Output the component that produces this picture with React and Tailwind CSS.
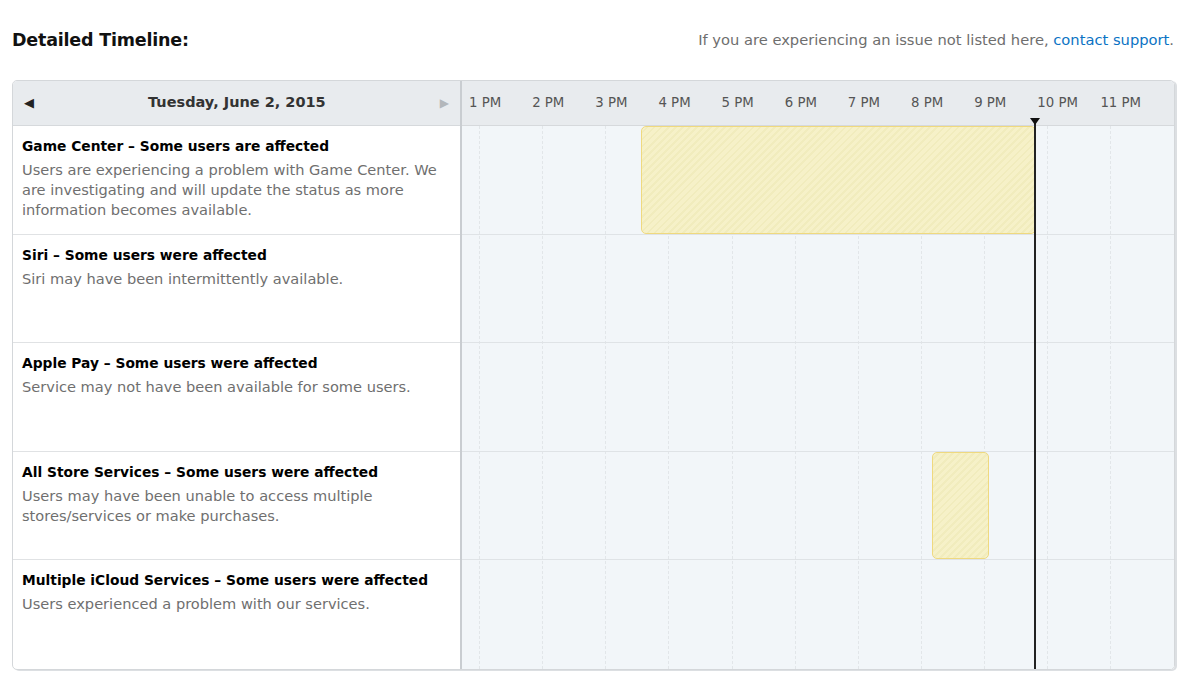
import React from 'react';

const incidents = [
  {
    title: 'Game Center - Some users are affected',
    desc: 'Users are experiencing a problem with Game Center. We are investigating and will update the status as more information becomes available.',
  },
  { title: 'Siri - Some users were affected', desc: 'Siri may have been intermittently available.' },
  { title: 'Apple Pay - Some users were affected', desc: 'Service may not have been available for some users.' },
  {
    title: 'All Store Services - Some users were affected',
    desc: 'Users may have been unable to access multiple stores/services or make purchases.',
  },
  { title: 'Multiple iCloud Services - Some users were affected', desc: 'Users experienced a problem with our services.' },
];

const hours = ['1 PM', '2 PM', '3 PM', '4 PM', '5 PM', '6 PM', '7 PM', '8 PM', '9 PM', '10 PM', '11 PM'];

// bars in px relative to timeline body
const bars = [
  { row: 0, left: 179, width: 395 },
  { row: 3, left: 470, width: 57 },
];

const ROW_H = 108.5;

function App() {
  return (
    <div className="w-[1200px] h-[690px] bg-white font-['DejaVu_Sans',sans-serif]">
      <div className="h-[80px] px-3 flex items-center justify-between">
        <h2 className="text-[17.5px] font-bold text-[#111] tracking-[-0.2px]">Detailed Timeline:</h2>
        <p className="text-[14.7px] text-[#6e6e6e] mr-[14px]">
          If you are experiencing an issue not listed here,{' '}
          <span className="text-[#0b73c4]">contact support</span>.
        </p>
      </div>

      <div className="ml-3 w-[1163px] flex border border-[#d4d7da] rounded-[5px] overflow-hidden shadow-[2px_1px_0_#dcdfe2]">
        {/* left list */}
        <div className="w-[447px] shrink-0 flex flex-col">
          <div className="h-[45px] bg-[#e8ebee] border-b border-[#d6d9dc] flex items-center px-[11px]">
            <span className="text-[13px] text-[#222]">◀</span>
            <span className="flex-1 text-center text-[14.5px] font-bold text-[#333]">Tuesday, June 2, 2015</span>
            <span className="text-[12px] text-[#b3b7bb]">▶</span>
          </div>
          {incidents.map((it, i) => (
            <div
              key={i}
              className={`h-[108.5px] px-[9px] pt-[10px] ${i < incidents.length - 1 ? 'border-b border-[#e0e2e4]' : ''}`}
            >
              <div className="text-[13.8px] leading-[20px] font-bold text-black">{it.title.replace(' - ', ' – ')}</div>
              <div className="mt-[4px] text-[14.6px] leading-[20px] text-[#6f6f6f] pr-[4px]">{it.desc}</div>
            </div>
          ))}
        </div>

        {/* divider */}
        <div className="w-[2px] shrink-0 bg-[#c9cdd1]" />

        {/* timeline */}
        <div className="flex-1 flex flex-col relative">
          <div className="h-[45px] bg-[#e8ebee] border-b border-[#d6d9dc] flex items-center pl-[7px]">
            {hours.map((h) => (
              <div key={h} className="w-[63.15px] shrink-0 text-[13.3px] text-[#555]">
                {h}
              </div>
            ))}
          </div>
          <div className="relative flex-1 bg-[#f2f6f9]">
            {/* vertical grid */}
            <div className="absolute inset-0 flex pl-[17px]">
              {hours.map((h) => (
                <div key={h} className="w-[63.15px] shrink-0 border-l border-dashed border-[#e2e6e9]" />
              ))}
            </div>
            {/* rows */}
            <div className="relative flex flex-col">
              {incidents.map((_, i) => (
                <div
                  key={i}
                  className={`h-[108.5px] ${i < incidents.length - 1 ? 'border-b border-[#dfe3e6]' : ''}`}
                />
              ))}
            </div>
            {bars.map((b, i) => (
              <div
                key={i}
                className="absolute rounded-[5px] border border-[#efd97f] bg-[repeating-linear-gradient(-45deg,#f6f1c8_0px,#f6f1c8_3px,#f1ecbd_3px,#f1ecbd_5px)]"
                style={{ left: b.left, width: b.width, top: b.row * ROW_H, height: ROW_H - 1 }}
              />
            ))}
            {/* current time */}
            <div className="absolute top-[-6px] bottom-0 left-[572px] w-[2px] bg-[#222]" />
          </div>
          <div className="absolute top-[37px] left-[568px] w-0 h-0 border-l-[5px] border-r-[5px] border-t-[7px] border-l-transparent border-r-transparent border-t-[#111]" />
        </div>
      </div>
    </div>
  );
}

export default App;
